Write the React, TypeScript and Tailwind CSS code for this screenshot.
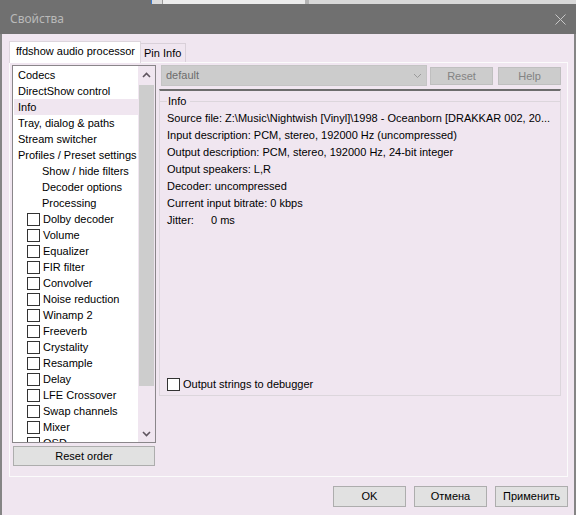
import React from 'react';

// ffdshow audio processor property sheet (Windows dialog, inactive title bar)

const font = "font-['Liberation_Sans',Arial,sans-serif]";

type Item = { label: string; kind: 'top' | 'sub' | 'check' };

const items: Item[] = [
    { label: 'Codecs', kind: 'top' },
    { label: 'DirectShow control', kind: 'top' },
    { label: 'Info', kind: 'top' },
    { label: 'Tray, dialog & paths', kind: 'top' },
    { label: 'Stream switcher', kind: 'top' },
    { label: 'Profiles / Preset settings', kind: 'top' },
    { label: 'Show / hide filters', kind: 'sub' },
    { label: 'Decoder options', kind: 'sub' },
    { label: 'Processing', kind: 'sub' },
    ...[
        'Dolby decoder', 'Volume', 'Equalizer', 'FIR filter', 'Convolver', 'Noise reduction',
        'Winamp 2', 'Freeverb', 'Crystality', 'Resample', 'Delay', 'LFE Crossover',
        'Swap channels', 'Mixer', 'OSD',
    ].map((label) => ({ label, kind: 'check' as const })),
];

const infoLines = [
    'Source file: Z:\\Music\\Nightwish [Vinyl]\\1998 - Oceanborn [DRAKKAR 002, 20...',
    'Input description: PCM, stereo, 192000 Hz (uncompressed)',
    'Output description: PCM, stereo, 192000 Hz, 24-bit integer',
    'Output speakers: L,R',
    'Decoder: uncompressed',
    'Current input bitrate: 0 kbps',
];

const CheckBox: React.FC = () => (
    <span className="w-[13px] h-[13px] border border-[#333333] bg-white shrink-0" />
);

const Chevron: React.FC<{ up?: boolean }> = ({ up }) => (
    <svg width="9" height="6" viewBox="0 0 9 6">
        <path
            d={up ? 'M1 5 L4.5 1.5 L8 5' : 'M1 1 L4.5 4.5 L8 1'}
            fill="none"
            stroke="#5f555f"
            strokeWidth="1.6"
        />
    </svg>
);

const Btn: React.FC<{ children: React.ReactNode; className?: string }> = ({ children, className }) => (
    <div
        className={`flex items-center justify-center border border-[#adadad] bg-[#e1e1e1] text-black ${className ?? ''}`}
    >
        {children}
    </div>
);

const App: React.FC = () => {
    return (
        <div className={`w-[576px] h-[515px] flex flex-col overflow-hidden bg-[#f0e6f0] text-[11px] text-black ${font}`}>
            {/* strip of the window behind */}
            <div className="flex h-[4px] shrink-0">
                <div className="w-[151px] bg-[#707070]" />
                <div className="w-px bg-[#3b7bd0]" />
                <div className="w-[10px] bg-[#dcdcdc]" />
                <div className="w-px bg-[#9a9a9a]" />
                <div className="w-[142px] bg-[#ececec]" />
                <div className="w-[4px] bg-[#b4b4b4]" />
                <div className="flex-1 bg-[#d8d8d8]" />
            </div>

            {/* Title bar */}
            <div className="h-[30px] shrink-0 bg-[#707070] flex items-center justify-between pl-[10px] pr-[10px]">
                <span className="text-[12px] text-[#b9b9b9] font-['Noto_Sans',sans-serif]">Свойства</span>
                <svg width="11" height="11" viewBox="0 0 11 11">
                    <path d="M0.5 0.5 L10.5 10.5 M10.5 0.5 L0.5 10.5" stroke="#c8c8c8" strokeWidth="1" />
                </svg>
            </div>

            {/* Body */}
            <div className="flex-1 flex flex-col border-x-2 border-[#858585]">
                {/* Tabs */}
                <div className="h-[28px] shrink-0 flex items-end pl-[7px]">
                    <div className="relative z-10 -mb-px h-[22px] w-[132px] bg-white border border-b-0 border-[#ddd6dd] flex items-center pl-[6px] pb-[2px]">
                        ffdshow audio processor
                    </div>
                    <div className="h-[19px] w-[45px] border-t border-r border-[#d9d0d9] flex items-center pl-[3px] pt-[1px]">
                        Pin Info
                    </div>
                </div>

                {/* Tab panel */}
                <div className="ml-[7px] w-[559px] h-[415px] shrink-0 border border-[#fbfbfb] flex pl-[2px] pt-[2px]">
                    {/* Left column */}
                    <div className="w-[144px] flex flex-col">
                        <div className="h-[378px] border border-[#8a868a] bg-white flex overflow-hidden">
                            <div className="flex-1 pt-px overflow-hidden">
                                {items.map((it) => (
                                    <div
                                        key={it.label}
                                        className={`h-[16px] ml-px flex items-center whitespace-nowrap ${
                                            it.label === 'Info' ? 'bg-[#f0e6f0]' : ''
                                        } ${it.kind === 'top' ? 'pl-[4px]' : it.kind === 'sub' ? 'pl-[28px]' : 'pl-[13px] gap-[3px]'}`}
                                    >
                                        {it.kind === 'check' && <CheckBox />}
                                        <span>{it.label}</span>
                                    </div>
                                ))}
                            </div>
                            {/* Scrollbar */}
                            <div className="w-[17px] shrink-0 bg-[#f0e6f0] flex flex-col items-center">
                                <div className="h-[17px] flex items-center justify-center">
                                    <Chevron up />
                                </div>
                                <div className="w-[15px] h-[301px] mt-[2px] bg-[#cdcdcd]" />
                                <div className="flex-1" />
                                <div className="h-[17px] flex items-center justify-center">
                                    <Chevron />
                                </div>
                            </div>
                        </div>
                        <Btn className="ml-px mt-[3px] w-[142px] h-[20px]">Reset order</Btn>
                    </div>

                    {/* Right column */}
                    <div className="ml-[3px] w-[402px] flex flex-col">
                        <div className="h-[21px] flex items-start">
                            <div className="ml-[2px] w-[266px] h-[21px] border border-[#c4c4c4] bg-[#cccccc] flex items-center justify-between pl-[4px] pr-[4px] text-[#6d6d6d]">
                                <span>default</span>
                                <svg width="9" height="6" viewBox="0 0 9 6">
                                    <path d="M1 1 L4.5 4.5 L8 1" fill="none" stroke="#9a9a9a" strokeWidth="1" />
                                </svg>
                            </div>
                            <div className="ml-[3px] mt-[2px] w-[63px] h-[18px] border border-[#bfbfbf] bg-[#cccccc] text-[#838383] flex items-center justify-center">
                                Reset
                            </div>
                            <div className="ml-[5px] mt-[2px] w-[63px] h-[18px] border border-[#bfbfbf] bg-[#cccccc] text-[#838383] flex items-center justify-center">
                                Help
                            </div>
                        </div>

                        {/* Info frame */}
                        <div className="mt-[3px] h-[307px] border-t-2 border-t-[#6d6d6d] border-x border-b border-[#dcd6dc] flex flex-col">
                            <div className="mt-[3px] h-[14px] flex items-center">
                                <div className="w-[7px] h-px bg-[#dcd6dc]" />
                                <span className="px-px">Info</span>
                                <div className="flex-1 h-px bg-[#dcd6dc] ml-[3px]" />
                            </div>
                            <div className="mt-[2px] pl-[7px] leading-[17px]">
                                {infoLines.map((l) => (
                                    <div key={l} className="whitespace-nowrap">{l}</div>
                                ))}
                                <div className="flex">
                                    <span className="w-[44px]">Jitter:</span>
                                    <span>0 ms</span>
                                </div>
                            </div>
                            <div className="mt-auto mb-[3px] h-[16px] pl-[7px] flex items-center gap-[3px]">
                                <CheckBox />
                                <span>Output strings to debugger</span>
                            </div>
                        </div>
                    </div>
                </div>

                {/* Dialog buttons */}
                <div className="mt-[9px] flex justify-end gap-[8px] pr-[6px]">
                    <Btn className="w-[73px] h-[21px]">OK</Btn>
                    <Btn className="w-[73px] h-[21px]">Отмена</Btn>
                    <Btn className="w-[73px] h-[21px]">Применить</Btn>
                </div>
            </div>
        </div>
    );
};

export default App;
